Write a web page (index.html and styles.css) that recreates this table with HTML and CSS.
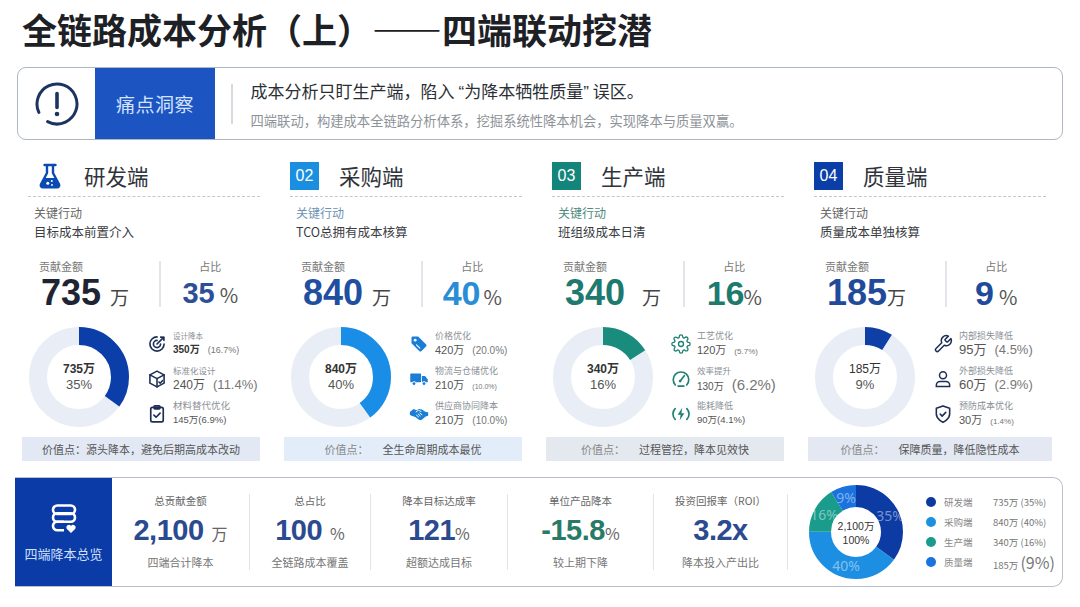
FILE: index.html
```html
<!DOCTYPE html>
<html lang="zh-CN">
<head>
<meta charset="utf-8">
<title>全链路成本分析</title>
<link rel="stylesheet" href="styles.css">
</head>
<body>
<h1 class="title">全链路成本分析（上）——四端联动挖潜</h1>

<div class="pain">
  <div class="pain-icon">
    <svg width="46" height="46" viewBox="0 0 46 46"><circle cx="23" cy="23" r="20" fill="none" stroke="#1d3461" stroke-width="3" stroke-dasharray="112 13.7" transform="rotate(155 23 23)" stroke-linecap="round"/><path d="M23 12.5v14" stroke="#1d3461" stroke-width="3.6" stroke-linecap="round"/><circle cx="23" cy="33" r="2.3" fill="#1d3461"/></svg>
  </div>
  <div class="pain-tag">痛点洞察</div>
  <div class="pain-div"></div>
  <div class="pain-text">
    <div class="pain-main">成本分析只盯生产端，陷入<span class="q qo">“</span>为降本牺牲质量<span class="q qc">”</span>误区。</div>
    <div class="pain-sub">四端联动，构建成本全链路分析体系，挖掘系统性降本机会，实现降本与质量双赢。</div>
  </div>
</div>

<div class="cols">
  <!-- 研发端 -->
  <div class="col">
    <div class="head">
      <svg class="flask" width="24" height="26" viewBox="0 0 24 26"><path d="M6.5 2h11" stroke="#0b4ab3" stroke-width="2.4" stroke-linecap="round"/><path d="M9 2.5v7.5L3 21.3C2.3 22.8 3.2 24.4 5 24.4h14c1.8 0 2.7-1.6 2-3.1L15 10V2.5" fill="none" stroke="#0b4ab3" stroke-width="2.4" stroke-linejoin="round"/><path d="M6 15h12l3 6.3c.7 1.5-.2 3.1-2 3.1H5c-1.8 0-2.7-1.6-2-3.1z" fill="#0b4ab3"/><circle cx="9.8" cy="20.3" r="1.5" fill="#fff"/><circle cx="13.8" cy="18" r="1" fill="#fff"/><circle cx="14" cy="22" r="0.9" fill="#fff"/></svg>
      <span class="head-title t1">研发端</span>
    </div>
    <div class="rule"></div>
    <div class="key">
      <div class="key-label">关键行动</div>
      <div class="key-text">目标成本前置介入</div>
    </div>
    <div class="metrics">
      <div class="m-left">
        <div class="m-label">贡献金额</div>
        <div class="m-val"><span class="num n1">735</span><span class="unit">万</span></div>
      </div>
      <div class="m-div"></div>
      <div class="m-right">
        <div class="m-label">占比</div>
        <div class="m-val"><span class="pct p1">35</span><span class="pu">%</span></div>
      </div>
    </div>
    <div class="chart">
      <div class="donut">
        <svg width="100" height="100" viewBox="0 0 100 100"><circle cx="50" cy="50" r="41" fill="none" stroke="#e9eef6" stroke-width="18"/><circle cx="50" cy="50" r="41" fill="none" stroke="#0b3ea8" stroke-width="18" stroke-dasharray="90.2 257.6" transform="rotate(-90 50 50)"/></svg>
        <div class="donut-center"><b>735万</b><span>35%</span></div>
      </div>
      <ul class="items">
        <li>
          <svg class="ico" viewBox="0 0 24 24"><g fill="none" stroke="#1e2f55" stroke-width="2" stroke-linecap="round" stroke-linejoin="round"><path d="M20.5 12A8.5 8.5 0 1 1 12 3.5"/><path d="M16.3 12A4.3 4.3 0 1 1 12 7.7"/><path d="M12 12l8-8"/><path d="M16.5 3.8l3.7.1.1 3.7"/></g></svg>
          <div><div class="i-label s7">设计降本</div><div class="i-val"><b class="dk">350万</b><span class="pp g8">(16.7%)</span></div></div>
        </li>
        <li>
          <svg class="ico" viewBox="0 0 24 24"><g fill="none" stroke="#1e2f55" stroke-width="1.9" stroke-linejoin="round" stroke-linecap="round"><path d="M12 2.5l8.5 4.5v10L12 21.5 3.5 17V7z"/><path d="M3.5 7L12 11.5 20.5 7"/><path d="M12 11.5v10"/><path d="M14.3 15.6l1.5 1.4 2.7-3"/></g></svg>
          <div><div class="i-label s85">标准化设计</div><div class="i-val v12">240万<span class="pp v13">(11.4%)</span></div></div>
        </li>
        <li>
          <svg class="ico" viewBox="0 0 24 24"><g fill="none" stroke="#1e2f55" stroke-width="2" stroke-linejoin="round" stroke-linecap="round"><rect x="4.5" y="4" width="15" height="17.5" rx="2"/><rect x="8.5" y="2.3" width="7" height="3.5" rx="1"/><path d="M8.3 13.3l2.6 2.6 4.8-5"/></g></svg>
          <div><div class="i-label s95">材料替代优化</div><div class="i-val v9">145万(6.9%)</div></div>
        </li>
      </ul>
    </div>
    <div class="valbar vb1">价值点：源头降本，避免后期高成本改动</div>
  </div>

  <!-- 采购端 -->
  <div class="col">
    <div class="head">
      <span class="badge b2">02</span>
      <span class="head-title">采购端</span>
    </div>
    <div class="rule"></div>
    <div class="key">
      <div class="key-label k2">关键行动</div>
      <div class="key-text">TCO总拥有成本核算</div>
    </div>
    <div class="metrics">
      <div class="m-left">
        <div class="m-label">贡献金额</div>
        <div class="m-val"><span class="num n2">840</span><span class="unit">万</span></div>
      </div>
      <div class="m-div"></div>
      <div class="m-right">
        <div class="m-label">占比</div>
        <div class="m-val"><span class="pct big p2">40</span><span class="pu tight">%</span></div>
      </div>
    </div>
    <div class="chart">
      <div class="donut">
        <svg width="100" height="100" viewBox="0 0 100 100"><circle cx="50" cy="50" r="41" fill="none" stroke="#e9eef6" stroke-width="18"/><circle cx="50" cy="50" r="41" fill="none" stroke="#1a8ee6" stroke-width="18" stroke-dasharray="103 257.6" transform="rotate(-90 50 50)"/></svg>
        <div class="donut-center"><b>840万</b><span>40%</span></div>
      </div>
      <ul class="items">
        <li>
          <svg class="ico" viewBox="0 0 24 24"><path d="M3 4.5V11l9.6 9.6a1.6 1.6 0 0 0 2.2 0l5.8-5.8a1.6 1.6 0 0 0 0-2.2L11 3H4.5A1.5 1.5 0 0 0 3 4.5z" fill="#1a7dd6"/><circle cx="7.4" cy="7.4" r="1.7" fill="#fff"/><path d="M9 13l4 4" stroke="#fff" stroke-width="1.3" stroke-linecap="round"/></svg>
          <div><div class="i-label">价格优化</div><div class="i-val v11">420万<span class="pp v10">(20.0%)</span></div></div>
        </li>
        <li>
          <svg class="ico" viewBox="0 0 24 24"><rect x="1.5" y="5.5" width="13" height="10.5" rx="1" fill="#1a7dd6"/><path d="M15.5 8.5h3.8l3.2 4V16h-7z" fill="#1a7dd6"/><circle cx="6" cy="17.5" r="2.3" fill="#1a7dd6" stroke="#fff" stroke-width="1.2"/><circle cx="18" cy="17.5" r="2.3" fill="#1a7dd6" stroke="#fff" stroke-width="1.2"/></svg>
          <div><div class="i-label">物流与仓储优化</div><div class="i-val v11">210万<span class="pp v7">(10.0%)</span></div></div>
        </li>
        <li>
          <svg class="ico" viewBox="0 0 24 24"><path d="M1 9.5l4.5-3.5 3.5 1.5 3-1.5 3.5.5 4.5 3 3 .5v4l-3 1-5.5 4.5-2.5-.5-4.5-3.5L3 14 1 13z" fill="#1a7dd6"/><path d="M8.5 9.5l3-2 3 1.5M9 13.5l2.5 2M11 12l2.5 2.3M13 10.8l2.5 2.2" fill="none" stroke="#fff" stroke-width="1.1" stroke-linecap="round"/></svg>
          <div><div class="i-label">供应商协同降本</div><div class="i-val v11">210万<span class="pp v10">(10.0%)</span></div></div>
        </li>
      </ul>
    </div>
    <div class="valbar vb2"><span class="vk">价值点：</span>全生命周期成本最优</div>
  </div>

  <!-- 生产端 -->
  <div class="col">
    <div class="head">
      <span class="badge b3">03</span>
      <span class="head-title">生产端</span>
    </div>
    <div class="rule"></div>
    <div class="key">
      <div class="key-label k3">关键行动</div>
      <div class="key-text">班组级成本日清</div>
    </div>
    <div class="metrics">
      <div class="m-left">
        <div class="m-label">贡献金额</div>
        <div class="m-val"><span class="num n3">340</span><span class="unit wide">万</span></div>
      </div>
      <div class="m-div"></div>
      <div class="m-right">
        <div class="m-label">占比</div>
        <div class="m-val"><span class="pct big p3">16</span><span class="pu none">%</span></div>
      </div>
    </div>
    <div class="chart">
      <div class="donut">
        <svg width="100" height="100" viewBox="0 0 100 100"><circle cx="50" cy="50" r="41" fill="none" stroke="#e9eef6" stroke-width="18"/><circle cx="50" cy="50" r="41" fill="none" stroke="#1a8c7e" stroke-width="18" stroke-dasharray="41.2 257.6" transform="rotate(-90 50 50)"/></svg>
        <div class="donut-center"><b>340万</b><span>16%</span></div>
      </div>
      <ul class="items">
        <li>
          <svg class="ico" viewBox="0 0 24 24"><g fill="none" stroke="#1f7f73" stroke-width="1.6"><circle cx="12" cy="12" r="3"/><path d="M19.4 15a1.65 1.65 0 0 0 .33 1.82l.06.06a2 2 0 0 1 0 2.83 2 2 0 0 1-2.83 0l-.06-.06a1.65 1.65 0 0 0-1.82-.33 1.65 1.65 0 0 0-1 1.51V21a2 2 0 0 1-2 2 2 2 0 0 1-2-2v-.09A1.65 1.65 0 0 0 9 19.4a1.65 1.65 0 0 0-1.82.33l-.06.06a2 2 0 0 1-2.83 0 2 2 0 0 1 0-2.83l.06-.06a1.65 1.65 0 0 0 .33-1.82 1.65 1.65 0 0 0-1.51-1H3a2 2 0 0 1-2-2 2 2 0 0 1 2-2h.09A1.65 1.65 0 0 0 4.6 9a1.65 1.65 0 0 0-.33-1.82l-.06-.06a2 2 0 0 1 0-2.83 2 2 0 0 1 2.83 0l.06.06a1.65 1.65 0 0 0 1.82.33H9a1.65 1.65 0 0 0 1-1.51V3a2 2 0 0 1 2-2 2 2 0 0 1 2 2v.09a1.65 1.65 0 0 0 1 1.51 1.65 1.65 0 0 0 1.82-.33l.06-.06a2 2 0 0 1 2.83 0 2 2 0 0 1 0 2.83l-.06.06a1.65 1.65 0 0 0-.33 1.82V9a1.65 1.65 0 0 0 1.51 1H21a2 2 0 0 1 2 2 2 2 0 0 1-2 2h-.09a1.65 1.65 0 0 0-1.51 1z"/></g></svg>
          <div><div class="i-label">工艺优化</div><div class="i-val v11">120万<span class="pp v8">(5.7%)</span></div></div>
        </li>
        <li>
          <svg class="ico" viewBox="0 0 24 24"><g fill="none" stroke="#1f7f73" stroke-width="2" stroke-linecap="round"><path d="M5.2 19.2A9.3 9.3 0 1 1 18.8 19.2"/><path d="M11 14.5l5-6.5"/><path d="M8.5 20.5h7"/></g><circle cx="11" cy="14.5" r="1.6" fill="#1f7f73"/></svg>
          <div><div class="i-label s85">效率提升</div><div class="i-val v10">130万<span class="pp v15">(6.2%)</span></div></div>
        </li>
        <li>
          <svg class="ico" viewBox="0 0 24 24"><path d="M5 5.5A9.3 9.3 0 0 0 5 18.5M19 5.5a9.3 9.3 0 0 1 0 13" fill="none" stroke="#1f7f73" stroke-width="2" stroke-linecap="round"/><path d="M13.5 4.5L8 13h3.5l-1 6.5L16 11h-3.5z" fill="#1f7f73"/></svg>
          <div><div class="i-label">能耗降低</div><div class="i-val v9">90万(4.1%)</div></div>
        </li>
      </ul>
    </div>
    <div class="valbar vb3"><span class="vk">价值点：</span>过程管控，降本见效快</div>
  </div>

  <!-- 质量端 -->
  <div class="col">
    <div class="head">
      <span class="badge b4">04</span>
      <span class="head-title">质量端</span>
    </div>
    <div class="rule"></div>
    <div class="key">
      <div class="key-label">关键行动</div>
      <div class="key-text">质量成本单独核算</div>
    </div>
    <div class="metrics">
      <div class="m-left">
        <div class="m-label">贡献金额</div>
        <div class="m-val"><span class="num n4">185</span><span class="unit flush">万</span></div>
      </div>
      <div class="m-div"></div>
      <div class="m-right">
        <div class="m-label">占比</div>
        <div class="m-val"><span class="pct big n4">9</span><span class="pu">%</span></div>
      </div>
    </div>
    <div class="chart">
      <div class="donut">
        <svg width="100" height="100" viewBox="0 0 100 100"><circle cx="50" cy="50" r="41" fill="none" stroke="#e9eef6" stroke-width="18"/><circle cx="50" cy="50" r="41" fill="none" stroke="#0d3fa6" stroke-width="18" stroke-dasharray="23.2 257.6" transform="rotate(-90 50 50)"/></svg>
        <div class="donut-center"><span class="lt">185万</span><span>9%</span></div>
      </div>
      <ul class="items">
        <li>
          <svg class="ico" viewBox="0 0 24 24"><path d="M14.7 6.3a1 1 0 0 0 0 1.4l1.6 1.6a1 1 0 0 0 1.4 0l3.77-3.77a6 6 0 0 1-7.94 7.94l-6.91 6.91a2.12 2.12 0 0 1-3-3l6.91-6.91a6 6 0 0 1 7.94-7.940l-3.76 3.76z" fill="none" stroke="#1e2f55" stroke-width="1.8" stroke-linejoin="round"/></svg>
          <div><div class="i-label">内部损失降低</div><div class="i-val v13">95万<span class="pp v13">(4.5%)</span></div></div>
        </li>
        <li>
          <svg class="ico" viewBox="0 0 24 24"><g fill="none" stroke="#1e2f55" stroke-width="1.8" stroke-linecap="round"><path d="M4 21v-1.5A4.5 4.5 0 0 1 8.5 15h7a4.5 4.5 0 0 1 4.5 4.5V21z"/><circle cx="12" cy="7.5" r="4.2"/></g></svg>
          <div><div class="i-label">外部损失降低</div><div class="i-val v13">60万<span class="pp v13">(2.9%)</span></div></div>
        </li>
        <li>
          <svg class="ico" viewBox="0 0 24 24"><g fill="none" stroke="#1e2f55" stroke-width="1.9" stroke-linecap="round" stroke-linejoin="round"><path d="M12 22s8-3.8 8-10V5.2L12 2.3 4 5.2V12c0 6.2 8 10 8 10z"/><path d="M8.7 12.2l2.3 2.3 4.3-4.5"/></g></svg>
          <div><div class="i-label">预防成本优化</div><div class="i-val v11">30万<span class="pp v8">(1.4%)</span></div></div>
        </li>
      </ul>
    </div>
    <div class="valbar vb4"><span class="vk">价值点：</span>保障质量，降低隐性成本</div>
  </div>
</div>

<div class="summary">
  <div class="sum-head">
    <svg width="30" height="32" viewBox="0 0 30 32"><g fill="none" stroke="#fff" stroke-width="2.6" stroke-linejoin="round"><rect x="4" y="2.5" width="22" height="8.5" rx="4.25"/><path d="M4 14.5a4.25 4.25 0 0 1 4.25-4.25h13.5A4.25 4.25 0 0 1 26 14.5v0a4.25 4.25 0 0 1-4.25 4.25H8.25A4.25 4.25 0 0 1 4 14.5z"/><path d="M15 27.3H8.25A4.25 4.25 0 0 1 4 23v0a4.25 4.25 0 0 1 4.25-4.25H15"/></g><path d="M22 30l-4.3-4.2a2.6 2.6 0 0 1 4.3-2.9 2.6 2.6 0 0 1 4.3 2.9z" fill="#fff"/></svg>
    <div class="sum-title">四端降本总览</div>
  </div>
  <div class="stat w1">
    <div class="stat-label">总贡献金额</div>
    <div class="stat-val"><span class="stat-num">2,100</span><span class="stat-unit">万</span></div>
    <div class="stat-sub">四端合计降本</div>
  </div>
  <div class="stat w2">
    <div class="stat-label">总占比</div>
    <div class="stat-val"><span class="stat-num">100</span><span class="stat-unit">%</span></div>
    <div class="stat-sub">全链路成本覆盖</div>
  </div>
  <div class="stat w3">
    <div class="stat-label">降本目标达成率</div>
    <div class="stat-val"><span class="stat-num">121</span><span class="stat-unit flush">%</span></div>
    <div class="stat-sub">超额达成目标</div>
  </div>
  <div class="stat w4">
    <div class="stat-label">单位产品降本</div>
    <div class="stat-val"><span class="stat-num teal">-15.8</span><span class="stat-unit flush">%</span></div>
    <div class="stat-sub">较上期下降</div>
  </div>
  <div class="stat w5">
    <div class="stat-label">投资回报率（ROI）</div>
    <div class="stat-val"><span class="stat-num">3.2x</span></div>
    <div class="stat-sub">降本投入产出比</div>
  </div>
  <div class="sum-chart">
    <svg width="96" height="96" viewBox="0 0 96 96">
      <g fill="none" stroke-width="22" transform="rotate(-90 48 48)">
        <circle cx="48" cy="48" r="36" stroke="#0c3ba3" stroke-dasharray="79.17 226.19"/>
        <circle cx="48" cy="48" r="36" stroke="#1d8fe2" stroke-dasharray="90.48 226.19" stroke-dashoffset="-79.17"/>
        <circle cx="48" cy="48" r="36" stroke="#1a9c8c" stroke-dasharray="36.19 226.19" stroke-dashoffset="-169.65"/>
        <circle cx="48" cy="48" r="36" stroke="#1a72de" stroke-dasharray="20.36 226.19" stroke-dashoffset="-205.84"/>
      </g>
      <g class="ring-lbl" fill="#ffffff" fill-opacity="0.45" text-anchor="middle">
        <text x="82" y="37">35%</text>
        <text x="38" y="87">40%</text>
        <text x="16" y="36">16%</text>
        <text x="38" y="19">9%</text>
      </g>
      <g class="ring-ctr" fill="#333" text-anchor="middle">
        <text x="48" y="46">2,100万</text>
        <text x="48" y="60">100%</text>
      </g>
    </svg>
  </div>
  <div class="legend">
    <div class="lg-row"><span class="dot d1"></span><span class="lg-name">研发端</span><span class="lg-val">735万 (35%)</span></div>
    <div class="lg-row"><span class="dot d2"></span><span class="lg-name">采购端</span><span class="lg-val">840万 (40%)</span></div>
    <div class="lg-row"><span class="dot d3"></span><span class="lg-name">生产端</span><span class="lg-val">340万 (16%)</span></div>
    <div class="lg-row"><span class="dot d4"></span><span class="lg-name">质量端</span><span class="lg-val">185万 <span class="lg-big">(9%)</span></span></div>
  </div>
</div>
</body>
</html>
```

FILE: styles.css
```css
* { box-sizing: border-box; }
html, body { margin: 0; padding: 0; }
body {
  width: 1080px;
  height: 607px;
  overflow: hidden;
  background: #ffffff;
  font-family: "Noto Sans CJK SC", "Noto Sans", sans-serif;
  color: #333;
}

.title {
  margin: 0;
  padding: 8px 0 0 22px;
  font-size: 35px;
  line-height: 42px;
  font-weight: 700;
  color: #1d2126;
}

/* pain box */
.pain {
  margin: 17px 17px 0;
  height: 73px;
  border: 1.5px solid #aeb6c1;
  border-radius: 9px;
  display: flex;
  overflow: hidden;
  background: #fff;
}
.pain-icon {
  width: 77px;
  display: flex;
  align-items: center;
  justify-content: center;
}
.pain-tag {
  width: 120px;
  background: #1c55c1;
  color: #d5e3ff;
  font-size: 19px;
  display: flex;
  align-items: center;
  justify-content: center;
  letter-spacing: 0.5px;
}
.pain-div {
  width: 1.5px;
  height: 40px;
  background: #d6dadf;
  align-self: center;
  margin: 0 18px 0 16px;
}
.pain-text {
  display: flex;
  flex-direction: column;
  justify-content: center;
  padding-top: 2px;
}
.pain-main { font-size: 17px; line-height: 22px; color: #2b2f35; }
.pain-main .q { font-family: "Liberation Sans", Arial, sans-serif; }
.pain-main .qo { margin-left: 4px; }
.pain-main .qc { margin-right: 4px; }
.pain-sub { font-size: 13.3px; line-height: 18px; color: #8e9399; margin-top: 8px; }

/* columns */
.cols {
  display: grid;
  grid-template-columns: repeat(4, 236px);
  column-gap: 26px;
  padding-left: 24px;
  margin-top: 12px;
}
.head {
  margin-top: 8px;
  height: 32px;
  display: flex;
  align-items: center;
  padding-left: 4px;
}
.flask { margin-left: 10px; flex: none; }
.head-title { margin-left: 20px; font-size: 21.5px; line-height: 30px; color: #30343a; }
.t1 { margin-left: 22px; }
.badge {
  width: 29px;
  height: 28px;
  display: flex;
  align-items: center;
  justify-content: center;
  color: #fff;
  font-family: "Liberation Sans", Arial, sans-serif;
  font-size: 16px;
}
.b2 { background: #1a8fe0; }
.b3 { background: #13857a; }
.b4 { background: #0c3ea8; }
.rule { border-top: 1.5px dashed #c4c8ce; margin: 4px 0 0 4px; }

.key { padding: 8px 0 0 10px; }
.key-label { font-size: 12px; line-height: 16px; color: #666; }
.k2 { color: #6d92b3; }
.k3 { color: #4d8a7d; }
.key-text { font-size: 12.5px; line-height: 18px; color: #3a3d42; margin-top: 2px; }

.metrics { display: flex; margin-top: 18px; height: 52px; }
.m-left { width: 135px; padding-left: 15px; }
.m-div { width: 1.5px; background: #e2e5e9; margin: 2px 0 4px; }
.m-right { flex: 1; text-align: center; }
.m-label { font-size: 11px; line-height: 14px; color: #777; }
.m-val { margin-top: 2px; height: 36px; line-height: 36px; white-space: nowrap; }
.num {
  font-family: "Liberation Sans", Arial, sans-serif;
  font-weight: 700;
  font-size: 36px;
  line-height: 36px;
  padding-left: 2px;
}
.unit { font-size: 19px; line-height: 19px; color: #444; margin-left: 9px; }
.unit.wide { margin-left: 17px; }
.unit.flush { margin-left: 0; }
.pct {
  font-family: "Liberation Sans", Arial, sans-serif;
  font-weight: 700;
  font-size: 29px;
  line-height: 36px;
}
.pct.big { font-size: 34px; }
.pu { font-size: 20px; line-height: 20px; color: #555; margin-left: 5px; }
.pu.tight { margin-left: 3px; }
.pu.none { margin-left: -1px; }
.n1 { color: #1e2433; }
.p1 { color: #2d4f98; }
.n2 { color: #1f4f9e; }
.p2 { color: #2a8ed6; }
.n3, .p3 { color: #1e7a6e; }
.n4 { color: #1f4b9a; }

.chart { display: flex; margin-top: 16px; height: 100px; }
.donut { width: 100px; height: 100px; margin-left: 5px; display: grid; flex: none; }
.donut > * { grid-area: 1 / 1; }
.donut-center {
  display: flex;
  flex-direction: column;
  align-items: center;
  justify-content: center;
  font-family: "Liberation Sans", "Noto Sans CJK SC", sans-serif;
  line-height: 15px;
}
.donut-center b { font-size: 12px; color: #333; }
.donut-center span { font-size: 13px; color: #555; }
.donut-center span.lt { font-size: 12px; color: #333; }

.items {
  list-style: none;
  margin: 0 0 0 18px;
  padding: 2px 0 0;
  display: flex;
  flex-direction: column;
  gap: 6px;
}
.items li { display: flex; align-items: center; height: 29px; }
.ico { width: 20px; height: 20px; flex: none; margin-right: 6px; }
.i-label { font-size: 9px; line-height: 13px; color: #8a8f96; white-space: nowrap; }
.i-label.s7 { font-size: 7.5px; }
.i-label.s85 { font-size: 8.5px; }
.i-label.s95 { font-size: 9.5px; }
.i-val {
  font-size: 10px;
  line-height: 16px;
  height: 16px;
  color: #555;
  white-space: nowrap;
  font-family: "Liberation Sans", "Noto Sans CJK SC", sans-serif;
}
.i-val .dk { color: #333; }
.pp { margin-left: 8px; color: #777; }
.g8 { font-size: 9px; }
.v7 { font-size: 7px; }
.v8 { font-size: 8px; }
.v9 { font-size: 9.5px; }
.v10 { font-size: 10px; }
.v11 { font-size: 11px; }
.v12 { font-size: 12px; }
.v13 { font-size: 13px; }
.v15 { font-size: 15px; }

.valbar {
  margin: 10px 0 0 -2px;
  height: 24px;
  font-size: 11px;
  color: #555;
  display: flex;
  align-items: center;
  justify-content: center;
}
.vk { color: #888; margin-right: 14px; }
.vb1 { background: #e3e9f4; }
.vb2 { background: #e2edf9; }
.vb3 { background: #e4e9ef; }
.vb4 { background: #e3e8f3; margin-right: -6px; }

/* summary */
.summary {
  margin: 16px 17px 0 15px;
  height: 110px;
  border: 1.5px solid #b9c0c9;
  border-left: none;
  border-radius: 0 10px 10px 0;
  display: flex;
  align-items: center;
  overflow: hidden;
}
.sum-head {
  width: 97px;
  height: 100%;
  flex: none;
  background: #0b3ba6;
  display: flex;
  flex-direction: column;
  align-items: center;
  justify-content: center;
  padding-top: 2px;
}
.sum-title { color: #cfe0ff; font-size: 13px; line-height: 18px; margin-top: 10px; }
.stat {
  height: 76px;
  flex: none;
  display: flex;
  flex-direction: column;
  align-items: center;
  border-right: 1.5px solid #e1e4e8;
}
.w1 { width: 138px; }
.w2 { width: 121px; }
.w3 { width: 137px; }
.w4 { width: 146px; }
.w5 { width: 134px; }
.stat-label { font-size: 10.5px; line-height: 14px; color: #666; white-space: nowrap; }
.stat-val { margin-top: 6px; height: 32px; line-height: 32px; white-space: nowrap; color: #2b4a8f; }
.stat-num {
  font-family: "Liberation Sans", Arial, sans-serif;
  font-weight: 700;
  font-size: 29px;
  line-height: 32px;
  letter-spacing: -0.5px;
}
.stat-num.teal { color: #2a7a68; }
.stat-unit { font-size: 16px; line-height: 16px; color: #666; margin-left: 8px; }
.stat-unit.flush { margin-left: 0; }
.stat-sub { margin-top: 8px; font-size: 11px; line-height: 16px; color: #777; white-space: nowrap; }

.sum-chart { margin-left: 20px; width: 96px; height: 96px; flex: none; }
.ring-lbl { font-family: "Noto Sans", sans-serif; font-size: 14px; }
.ring-ctr { font-family: "Liberation Sans", "Noto Sans CJK SC", sans-serif; font-size: 10.5px; }

.legend { margin-left: 22px; display: flex; flex-direction: column; }
.lg-row { display: flex; align-items: center; height: 20px; font-size: 9.5px; color: #777; white-space: nowrap; }
.dot { width: 10px; height: 10px; border-radius: 50%; margin-right: 8px; flex: none; }
.d1 { background: #0c3a9e; }
.d2 { background: #1e90e0; }
.d3 { background: #1a9c8c; }
.d4 { background: #1a74e0; }
.lg-name { width: 49px; color: #888; }
.lg-val { color: #777; }
.lg-big { font-size: 16px; }
```
